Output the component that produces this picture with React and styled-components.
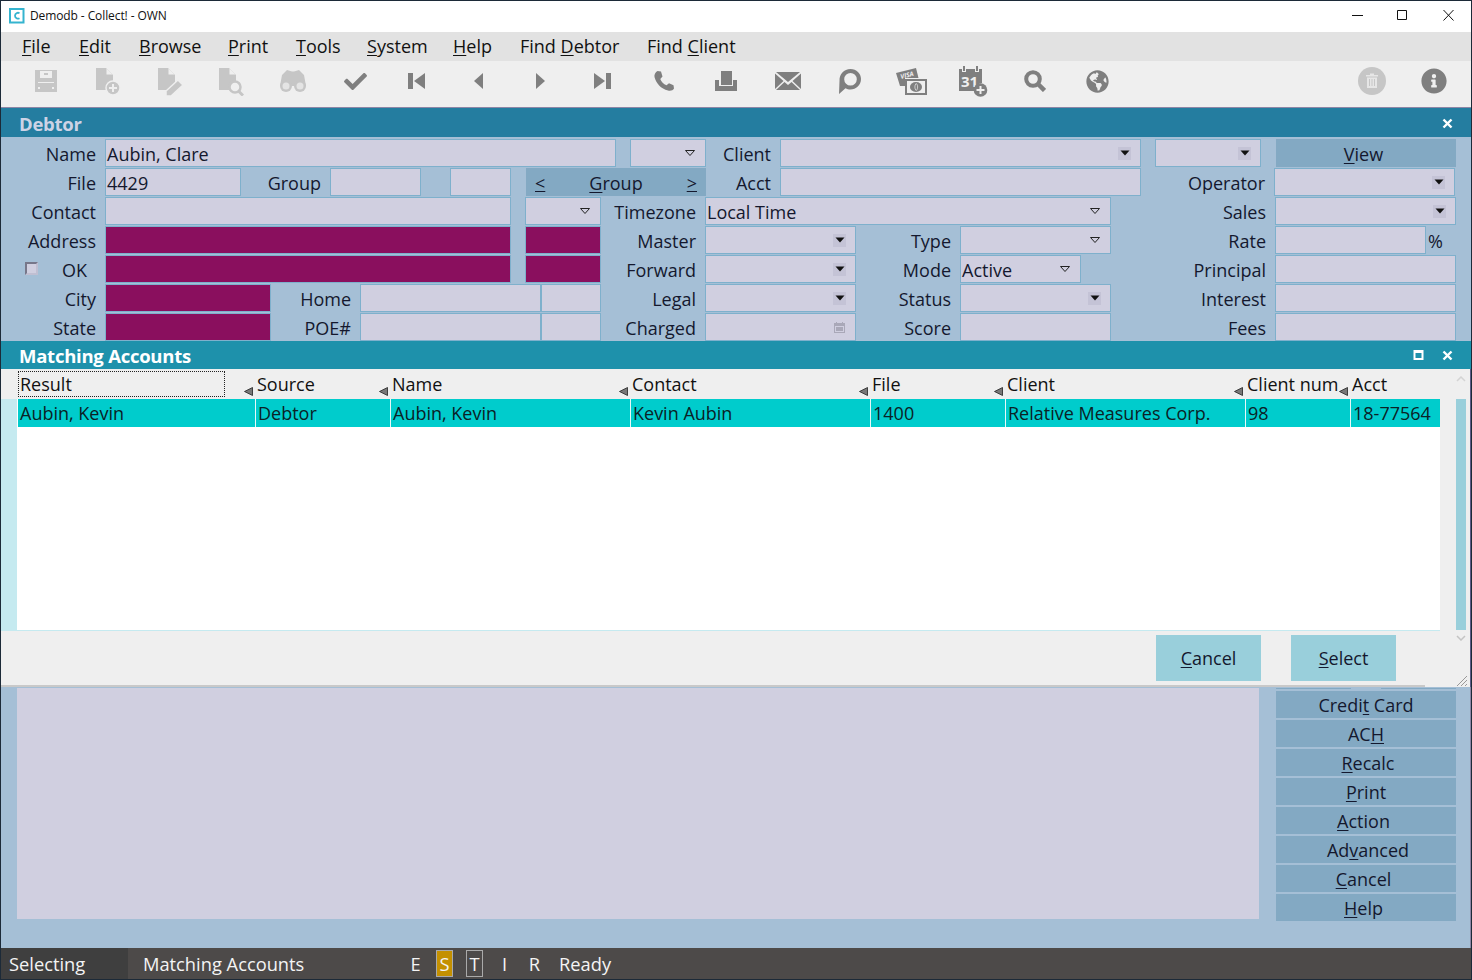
import React from 'react';
import styled, { createGlobalStyle } from 'styled-components';
import { FaCheck, FaGlobeAmericas, FaInfoCircle } from 'react-icons/fa';

const GlobalStyle = createGlobalStyle`
	html, body {
		margin: 0;
		padding: 0;
		background: #a5bfd6;
	}
	* {
		box-sizing: border-box;
	}
	body {
		font-family: 'Open Sans', 'Noto Sans', sans-serif;
		color: #14182e;
	}
`;

const Window = styled.div`
	width: 1472px;
	height: 980px;
	display: flex;
	flex-direction: column;
	border: 1px solid #1c2a38;
	overflow: hidden;
	font-size: 18px;
`;

const TitleBar = styled.div`
	height: 31px;
	flex: none;
	background: #fff;
	display: flex;
	align-items: center;
	padding-left: 8px;
	padding-bottom: 2px;
	color: #111;
`;
const TitleText = styled.span`
	font-size: 12px;
	letter-spacing: -0.1px;
	margin-left: 5px;
`;
const WinButtons = styled.div`
	margin-left: auto;
	display: flex;
	align-items: center;
	gap: 29px;
	padding-right: 15px;
`;

const MenuBar = styled.div`
	height: 29px;
	flex: none;
	background: #e2e2e2;
	display: flex;
	align-items: center;
	padding-left: 21px;
	padding-bottom: 2px;
	color: #111;
`;
const MenuItem = styled.span`
	flex: none;
	width: ${(p) => p.$w}px;
	white-space: nowrap;
`;

const Toolbar = styled.div`
	height: 47px;
	flex: none;
	background: #efefef;
	border-bottom: 1px solid #8d86a6;
	display: flex;
	align-items: center;
	padding-bottom: 6px;
`;
const ToolSlot = styled.div`
	width: 61.85px;
	height: 40px;
	flex: none;
	display: flex;
	align-items: center;
	justify-content: center;
	color: ${(p) => (p.$off ? '#c6c6c6' : '#7f7f7f')};
`;
const ToolStart = styled.div`
	width: ${(p) => p.$w}px;
	flex: none;
`;
const ToolPush = styled.div`
	margin-left: auto;
`;

const PanelHeader = styled.div`
	height: ${(p) => p.$h}px;
	flex: none;
	background: ${(p) => p.$bg};
	display: flex;
	align-items: center;
	padding: ${(p) => p.$pt || 0}px 18px 0 18px;
	font-weight: 700;
	font-size: 18.5px;
	letter-spacing: -0.25px;
	color: ${(p) => p.$color};
`;
const HeaderIcons = styled.div`
	margin-left: auto;
	display: flex;
	align-items: center;
	gap: 18px;
`;

const Form = styled.div`
	height: 204px;
	flex: none;
	padding-top: 2px;
	display: flex;
	flex-direction: column;
	gap: 1px;
	overflow: hidden;
`;
const Row = styled.div`
	display: flex;
	height: 28px;
	flex: none;
`;
const Label = styled.div`
	flex: none;
	width: ${(p) => p.$w}px;
	margin-right: 9px;
	text-align: right;
	line-height: 30px;
	white-space: nowrap;
`;
const Field = styled.div`
	flex: none;
	width: ${(p) => p.$w}px;
	margin-left: ${(p) => p.$ml || 0}px;
	height: 28px;
	background: ${(p) => (p.$alert ? '#8a0f5e' : '#d0cfe0')};
	border: 1px solid #7eb0cc;
	padding: 2px 0 0 1px;
	line-height: 26px;
	display: flex;
	justify-content: space-between;
	align-items: center;
`;
const Arrow = styled.span`
	flex: none;
	width: 13px;
	height: 13px;
	margin-top: -2px;
	margin-right: 9px;
	background: ${(p) => (p.$box ? '#c4c3d6' : 'transparent')};
	display: flex;
	align-items: center;
	justify-content: center;
`;
const FormButton = styled.div`
	flex: none;
	width: ${(p) => p.$w}px;
	margin-left: ${(p) => p.$ml || 0}px;
	height: 28px;
	padding-top: 2px;
	padding-right: ${(p) => p.$pr || 0}px;
	background: #83a9c3;
	display: flex;
	align-items: center;
	justify-content: center;
	line-height: 26px;
`;
const GroupLink = styled.span`
	text-decoration: underline;
	margin: 0 9px;
`;
const GroupName = styled.span`
	flex: 1;
	text-align: center;
`;
const Percent = styled.span`
	margin-left: 2px;
	line-height: 30px;
`;
const Check = styled.span`
	flex: none;
	width: 13px;
	height: 13px;
	margin: 7px 0 0 24px;
	background: #d0cfe0;
	border: 2px solid #77778a;
	border-right-color: #c0bfd2;
	border-bottom-color: #c0bfd2;
`;
const OkLabel = styled.div`
	flex: none;
	width: 49px;
	margin-right: 18px;
	text-align: right;
	line-height: 30px;
`;

const MatchBody = styled.div`
	height: 318px;
	flex: none;
	background: #efefef;
	display: flex;
	position: relative;
	overflow: hidden;
`;
const MatchMain = styled.div`
	flex: 1;
	min-width: 0;
	display: flex;
	flex-direction: column;
`;
const ListArea = styled.div`
	height: 262px;
	flex: none;
	padding-left: 16px;
	background: #c5eaf0;
	display: flex;
	flex-direction: column;
	border-bottom: 1px solid #c5eaf0;
`;
const HeadRow = styled.div`
	height: 30px;
	flex: none;
	display: flex;
	background: #efefef;
	margin-left: -16px;
	padding-left: 17px;
`;
const HeadCell = styled.div`
	flex: none;
	width: ${(p) => p.$w}px;
	position: relative;
	padding-left: 1px;
	line-height: 30px;
	color: #111;
	white-space: nowrap;
	&:first-child {
		padding-left: 2px;
	}
`;
const FocusBox = styled.span`
	position: absolute;
	left: 0;
	top: 2px;
	width: 207px;
	height: 26px;
	border: 1px dotted #222;
`;
const SortMark = styled.span`
	position: absolute;
	right: 3px;
	bottom: 3px;
	width: 9px;
	height: 9px;
	display: flex;
`;
const ListBody = styled.div`
	flex: 1;
	background: #fff;
`;
const DataRow = styled.div`
	height: 28px;
	margin-left: 1px;
	display: flex;
	background: #00cccc;
`;
const DataCell = styled.div`
	flex: none;
	width: ${(p) => p.$w}px;
	padding-left: 2px;
	border-right: 1px solid #e8f8f8;
	line-height: 28px;
	color: #0b2226;
	white-space: nowrap;
	&:last-child {
		border-right: none;
	}
`;
const ActionBar = styled.div`
	flex: 1;
	display: flex;
	justify-content: flex-end;
	align-items: flex-start;
	padding: 4px 29px 0 0;
	gap: 30px;
	margin-right: 15px;
	border-bottom: 2px solid #c9c9c9;
`;
const DialogButton = styled.div`
	width: 105px;
	height: 46px;
	background: #99cfdb;
	display: flex;
	align-items: center;
	justify-content: center;
`;
const ScrollCol = styled.div`
	width: 30px;
	flex: none;
	display: flex;
	flex-direction: column;
	align-items: center;
	padding: 7px 0 0 12px;
`;
const ScrollThumb = styled.div`
	width: 10px;
	height: 231px;
	margin-top: 17px;
	background: #99cfdb;
`;
const ScrollDown = styled.div`
	display: flex;
	margin-top: 5px;
`;
const RightEdge = styled.div`
	width: 1px;
	flex: none;
	background: #5c5a86;
`;
const Grip = styled.svg`
	position: absolute;
	right: 3px;
	bottom: 0;
`;

const Lower = styled.div`
	flex: 1;
	min-height: 0;
	display: flex;
	padding: 1px 14px 0 16px;
	background: #a5bfd6;
	border-right: 1px solid #8d86a6;
`;
const NotesPane = styled.div`
	width: 1242px;
	height: 231px;
	flex: none;
	background: #d0cfe0;
`;
const SideButtons = styled.div`
	margin-left: auto;
	width: 180px;
	display: flex;
	flex-direction: column;
	gap: 2px;
`;
const HiddenEdge = styled.div`
	height: 1px;
	flex: none;
	display: flex;
	justify-content: space-between;
`;
const HiddenEdgePart = styled.div`
	width: 75px;
	background: #83a9c3;
`;
const SideButton = styled.div`
	height: 27px;
	flex: none;
	background: #83a9c3;
	padding-left: ${(p) => (p.$nudge > 0 ? p.$nudge : 0)}px;
	padding-right: ${(p) => (p.$nudge < 0 ? -p.$nudge : 0)}px;
	display: flex;
	align-items: center;
	justify-content: center;
	line-height: 30px;
`;

const StatusBar = styled.div`
	height: 31px;
	flex: none;
	background: #4d4a49;
	color: #f4f4f4;
	display: flex;
	align-items: stretch;
	font-size: 18.3px;
	line-height: 32px;
`;
const StatusMode = styled.div`
	width: 127px;
	flex: none;
	background: #3f3f3f;
	padding-left: 8px;
`;
const StatusContext = styled.div`
	width: 279px;
	flex: none;
	padding-left: 15px;
	white-space: nowrap;
`;
const Flag = styled.div`
	width: 17px;
	height: 27px;
	align-self: center;
	flex: none;
	margin-right: ${(p) => p.$mr}px;
	display: flex;
	align-items: center;
	justify-content: center;
	background: ${(p) => (p.$on ? '#c49000' : 'transparent')};
	border: 1px solid ${(p) => (p.$on || p.$ring ? '#aaa' : 'transparent')};
`;

const U = styled.span`
	text-decoration: underline;
	text-underline-offset: 2px;
`;

const DropArrow = ({ filled }) => (
	<svg width="10" height="6" viewBox="0 0 10 6">
		{filled ? (
			<path d="M0.5 0.5h9L5 5.5z" fill="#111" />
		) : (
			<path d="M0.5 0.5h9L5 5.5z" fill="none" stroke="#222" />
		)}
	</svg>
);

const Combo = ({ w, ml, box, children }) => (
	<Field $w={w} $ml={ml}>
		<span>{children}</span>
		<Arrow $box={box}>
			<DropArrow filled={box} />
		</Arrow>
	</Field>
);

const CloseIcon = () => (
	<svg width="11" height="11" viewBox="0 0 11 11">
		<path d="M1.5 1.5l8 8M9.5 1.5l-8 8" stroke="#fff" strokeWidth="2.4" />
	</svg>
);

const Sort = () => (
	<SortMark>
		<svg width="9" height="9" viewBox="0 0 9 9">
			<path d="M8.5 0.5v8L0.5 4.5z" fill="#777" stroke="#222" strokeWidth="0.8" />
		</svg>
	</SortMark>
);

const FileBase = ({ children }) => (
	<svg width="26" height="29" viewBox="0 0 26 29" fill="currentColor">
		<path d="M1 1h10l7 7v15H1z" />
		<path d="M11.500 1.500v6h6z" fill="#efefef" />
		{children}
	</svg>
);

const icons = {
	save: (
		<svg width="22" height="22" viewBox="0 0 22 22" fill="currentColor">
			<path fillRule="evenodd" d="M0 0h22v22H0zM5 1v7h12V1zM3 12v1h16v-1zM3 17h2v2H3zM17 17h2v2h-2z" />
			<path d="M9 3h4v2H9z" />
		</svg>
	),
	add: (
		<FileBase>
			<circle cx="18" cy="21" r="7" stroke="#efefef" strokeWidth="1.500" />
			<path d="M14 20h8v2h-8zM17 17h2v8h-2z" fill="#efefef" />
		</FileBase>
	),
	edit: (
		<FileBase>
			<path d="M21 13l5 5-12 11h-5v-5z" stroke="#efefef" strokeWidth="1.500" />
		</FileBase>
	),
	find: (
		<FileBase>
			<circle cx="17" cy="20" r="5.500" fill="#efefef" stroke="currentColor" strokeWidth="2.500" />
			<path d="M20.500 24l4.500 4.500" stroke="currentColor" strokeWidth="3" />
		</FileBase>
	),
	binoculars: (
		<svg width="26" height="22" viewBox="0 0 26 22" fill="currentColor">
			<path d="M7 0l5 1.500h2L19 0l5 5 2 11H0l2-11z" />
			<circle cx="6" cy="16" r="6" />
			<circle cx="20" cy="16" r="6" />
			<circle cx="6" cy="16" r="3.500" fill="#e4e4e4" />
			<circle cx="20" cy="16" r="3.500" fill="#e4e4e4" />
		</svg>
	),
	check: <FaCheck size={23} />,
	first: (
		<svg width="17" height="16" viewBox="0 0 17 16" fill="currentColor">
			<path d="M0 0h5v16H0zM17 0v16L6 8z" />
		</svg>
	),
	prev: (
		<svg width="9" height="16" viewBox="0 0 9 16" fill="currentColor">
			<path d="M9 0v16L0 8z" />
		</svg>
	),
	next: (
		<svg width="9" height="16" viewBox="0 0 9 16" fill="currentColor">
			<path d="M0 0v16l9-8z" />
		</svg>
	),
	last: (
		<svg width="17" height="16" viewBox="0 0 17 16" fill="currentColor">
			<path d="M0 0v16l11-8zM12 0h5v16h-5z" />
		</svg>
	),
	phone: (
		<svg width="20" height="20" viewBox="0 0 20 20" fill="currentColor">
			<path d="M3.500 0L7 .5l1.500 5L6.300 8C7.300 11 9.500 13 12.500 14.200l2.500-2 4.500 2 .5 3.300C19 19.500 16.500 20 14 19.500 7 18 2 12 .5 6 0 3.500 1.500 1 3.500 0z" />
		</svg>
	),
	stamp: (
		<svg width="22" height="20" viewBox="0 0 22 20" fill="currentColor">
			<path d="M6 0h11v14H6zM0 9h4v6h14V9h4v11H0z" />
		</svg>
	),
	mail: (
		<svg width="26" height="18" viewBox="0 0 26 18" fill="currentColor">
			<path d="M1 0h24L13 10zM0 1.500l8.500 7.500L0 17zM26 1.500L17.500 9l8.500 8zM9.500 10l3.500 3 3.500-3L25 18H1z" />
		</svg>
	),
	pin: (
		<svg width="22" height="25" viewBox="0 0 22 25" fill="currentColor">
			<path fillRule="evenodd" d="M11.500 0C17.500 0 22 4.500 22 10c0 6-5 10.500-10.500 10.500-2 0-3.500-.5-5-1.300L0 25l.5-13C0 5 5 0 11.500 0zM11.500 4a6.300 6.300 0 100 12.600 6.300 6.300 0 000-12.600z" />
		</svg>
	),
	card: (
		<svg width="31" height="27" viewBox="0 0 31 27" fill="currentColor">
			<path d="M0 5l20-5 2.500 10H9v8H4z" />
			<text x="5" y="11" fontSize="6.500" fontWeight="700" fontStyle="italic" fill="#efefef" transform="rotate(-14 5 11)">VISA</text>
			<path fillRule="evenodd" d="M9 11h22v16H9zM11 13v12h18V13z" />
			<ellipse cx="20" cy="19" rx="6" ry="5" />
			<path d="M20 15.500c-1.500 2-1.500 5 0 7M20.500 15.500c1.500 2 1.500 5 0 7" fill="none" stroke="#efefef" strokeWidth=".7" />
		</svg>
	),
	calendar: (
		<svg width="29" height="31" viewBox="0 0 29 31" fill="currentColor">
			<path d="M4 0h2v5H4zM17 0h2v5h-2z" />
			<path d="M0 3h3v3h4V3h9v3h4V3h3v14a8 8 0 00-7 8H0z" />
			<text x="2" y="21" fontSize="15" fontWeight="700" fill="#efefef">31</text>
			<circle cx="21.500" cy="24" r="6.800" />
			<path d="M17.500 23h8v2h-8zM20.500 20h2v8h-2z" fill="#efefef" />
		</svg>
	),
	search: (
		<svg width="22" height="22" viewBox="0 0 22 22" fill="none" stroke="currentColor">
			<circle cx="9" cy="9" r="6.800" strokeWidth="4" />
			<path d="M14 14l6.500 6.500" strokeWidth="4.500" />
		</svg>
	),
	globe: <FaGlobeAmericas size={23} />,
	trash: (
		<svg width="28" height="28" viewBox="0 0 28 28">
			<circle cx="14" cy="14" r="14" fill="currentColor" />
			<path d="M8 8h12v1.500H8zM12 6.500h4V8h-4zM9 10.500h10V21H9z" fill="#e6e6e6" />
			<path d="M11.500 12v7M14 12v7M16.500 12v7" stroke="#c6c6c6" />
		</svg>
	),
	info: <FaInfoCircle size={26} />,
};

const toolbar = [
	['save', true],
	['add', true],
	['edit', true],
	['find', true],
	['binoculars', true],
	['check'],
	['first'],
	['prev'],
	['next'],
	['last'],
	['phone'],
	['stamp'],
	['mail'],
	['pin'],
	['card'],
	['calendar'],
	['search'],
	['globe'],
];

const columns = [
	{ w: 238, head: 'Result', cell: 'Aubin, Kevin' },
	{ w: 135, head: 'Source', cell: 'Debtor' },
	{ w: 240, head: 'Name', cell: 'Aubin, Kevin' },
	{ w: 240, head: 'Contact', cell: 'Kevin Aubin' },
	{ w: 135, head: 'File', cell: '1400' },
	{ w: 240, head: 'Client', cell: 'Relative Measures Corp.' },
	{ w: 105, head: 'Client num', cell: '98' },
	{ w: 90, head: 'Acct', cell: '18-77564' },
];

const sideButtons = [
	['Credi', 't', ' Card', 0],
	['AC', 'H', '', 0],
	['', 'R', 'ecalc', 4],
	['', 'P', 'rint', 0],
	['', 'A', 'ction', -5],
	['Ad', 'v', 'anced', 4],
	['', 'C', 'ancel', -5],
	['', 'H', 'elp', -5],
];

const App = () => (
	<Window>
		<GlobalStyle />
		<TitleBar>
			<svg width="16" height="16" viewBox="0 0 16 16">
				<rect x="1" y="1" width="13.500" height="13.500" fill="#fff" stroke="#35b4cf" strokeWidth="2" />
				<path d="M10.500 5.200A3 3 0 006 7.700a3 3 0 004.500 2.500" fill="none" stroke="#35b4cf" strokeWidth="1.800" />
			</svg>
			<TitleText>Demodb - Collect! - OWN</TitleText>
			<WinButtons>
				<svg width="16" height="11" viewBox="0 0 16 11"><path d="M2 5.500h11" stroke="#111" /></svg>
				<svg width="16" height="11" viewBox="0 0 16 11"><path d="M2.500 .5h9v9h-9z" fill="none" stroke="#111" /></svg>
				<svg width="16" height="11" viewBox="0 0 16 11"><path d="M3.500 0l10 10.500M13.500 0l-10 10.500" stroke="#111" /></svg>
			</WinButtons>
		</TitleBar>
		<MenuBar>
			<MenuItem $w={57}><U>F</U>ile</MenuItem>
			<MenuItem $w={60}><U>E</U>dit</MenuItem>
			<MenuItem $w={89}><U>B</U>rowse</MenuItem>
			<MenuItem $w={68}><U>P</U>rint</MenuItem>
			<MenuItem $w={71}><U>T</U>ools</MenuItem>
			<MenuItem $w={86}><U>S</U>ystem</MenuItem>
			<MenuItem $w={67}><U>H</U>elp</MenuItem>
			<MenuItem $w={127}>Find <U>D</U>ebtor</MenuItem>
			<MenuItem $w={100}>Find <U>C</U>lient</MenuItem>
		</MenuBar>
		<Toolbar>
			<ToolStart $w={14} />
			{toolbar.map(([name, off]) => (
				<ToolSlot key={name} $off={off}>
					{icons[name]}
				</ToolSlot>
			))}
			<ToolPush />
			<ToolSlot $off>{icons.trash}</ToolSlot>
			<ToolSlot>{icons.info}</ToolSlot>
			<ToolStart $w={6} />
		</Toolbar>
		<PanelHeader $h={29} $pt={2} $bg="#247da0" $color="#cdd3e6">
			Debtor
			<HeaderIcons>
				<CloseIcon />
			</HeaderIcons>
		</PanelHeader>
		<Form>
			<Row>
				<Label $w={95}>Name</Label>
				<Field $w={511}>Aubin, Clare</Field>
				<Combo w={76} ml={14} />
				<Label $w={65}>Client</Label>
				<Combo w={361} box />
				<Combo w={106} ml={14} box />
				<FormButton $w={180} $ml={15} $pr={5}><span><U>V</U>iew</span></FormButton>
			</Row>
			<Row>
				<Label $w={95}>File</Label>
				<Field $w={136}>4429</Field>
				<Label $w={80}>Group</Label>
				<Field $w={91} />
				<Field $w={61} $ml={29} />
				<FormButton $w={180} $ml={15}>
					<GroupLink>&lt;</GroupLink>
					<GroupName><U>G</U>roup</GroupName>
					<GroupLink>&gt;</GroupLink>
				</FormButton>
				<Label $w={65}>Acct</Label>
				<Field $w={361} />
				<Label $w={124}>Operator</Label>
				<Combo w={181} box />
			</Row>
			<Row>
				<Label $w={95}>Contact</Label>
				<Field $w={406} />
				<Combo w={76} ml={14} />
				<Label $w={95}>Timezone</Label>
				<Combo w={406}>Local Time</Combo>
				<Label $w={155}>Sales</Label>
				<Combo w={181} box />
			</Row>
			<Row>
				<Label $w={95}>Address</Label>
				<Field $w={406} $alert />
				<Field $w={76} $ml={14} $alert />
				<Label $w={95}>Master</Label>
				<Combo w={151} box />
				<Label $w={95}>Type</Label>
				<Combo w={151} />
				<Label $w={155}>Rate</Label>
				<Field $w={151} />
				<Percent>%</Percent>
			</Row>
			<Row>
				<Check />
				<OkLabel>OK</OkLabel>
				<Field $w={406} $alert />
				<Field $w={76} $ml={14} $alert />
				<Label $w={95}>Forward</Label>
				<Combo w={151} box />
				<Label $w={95}>Mode</Label>
				<Combo w={121}>Active</Combo>
				<Label $w={185}>Principal</Label>
				<Field $w={181} />
			</Row>
			<Row>
				<Label $w={95}>City</Label>
				<Field $w={166} $alert />
				<Label $w={80}>Home</Label>
				<Field $w={181} />
				<Field $w={60} />
				<Label $w={95}>Legal</Label>
				<Combo w={151} box />
				<Label $w={95}>Status</Label>
				<Combo w={151} box />
				<Label $w={155}>Interest</Label>
				<Field $w={181} />
			</Row>
			<Row>
				<Label $w={95}>State</Label>
				<Field $w={166} $alert />
				<Label $w={80}>POE#</Label>
				<Field $w={181} />
				<Field $w={60} />
				<Label $w={95}>Charged</Label>
				<Field $w={151}>
					<span />
					<Arrow>
						<svg width="11" height="11" viewBox="0 0 11 11" fill="#a9a8b8">
							<path fillRule="evenodd" d="M0 1h11v10H0zM1 4v6h9V4z" />
							<path d="M2 0h1v2H2zM8 0h1v2H8zM2 5h7v4H2z" />
						</svg>
					</Arrow>
				</Field>
				<Label $w={95}>Score</Label>
				<Field $w={151} />
				<Label $w={155}>Fees</Label>
				<Field $w={181} />
			</Row>
		</Form>
		<PanelHeader $h={28} $bg="#1e91ab" $color="#fff">
			Matching Accounts
			<HeaderIcons>
				<svg width="11" height="10" viewBox="0 0 11 10">
					<path fillRule="evenodd" d="M0.500 0h10v10H.5zM2.500 3v5h6V3z" fill="#fff" />
				</svg>
				<CloseIcon />
			</HeaderIcons>
		</PanelHeader>
		<MatchBody>
			<MatchMain>
				<ListArea>
					<HeadRow>
						{columns.map((c, i) => (
							<HeadCell key={c.head} $w={c.w}>
								{i === 0 && <FocusBox />}
								{c.head}
								{i < 7 && <Sort />}
							</HeadCell>
						))}
					</HeadRow>
					<ListBody>
						<DataRow>
							{columns.map((c) => (
								<DataCell key={c.head} $w={c.w}>{c.cell}</DataCell>
							))}
						</DataRow>
					</ListBody>
				</ListArea>
				<ActionBar>
					<DialogButton><span><U>C</U>ancel</span></DialogButton>
					<DialogButton><span><U>S</U>elect</span></DialogButton>
				</ActionBar>
			</MatchMain>
			<ScrollCol>
				<svg width="10" height="6" viewBox="0 0 10 6"><path d="M1 5l4-4 4 4" fill="none" stroke="#d4d4d4" strokeWidth="1.500" /></svg>
				<ScrollThumb />
				<ScrollDown>
					<svg width="10" height="6" viewBox="0 0 10 6"><path d="M1 1l4 4 4-4" fill="none" stroke="#c4c4c4" strokeWidth="1.500" /></svg>
				</ScrollDown>
			</ScrollCol>
			<RightEdge />
			<Grip width="12" height="12" viewBox="0 0 12 12">
				<path d="M1 11L11 1M5 11l6-6M9 11l2-2" stroke="#999" />
			</Grip>
		</MatchBody>
		<Lower>
			<NotesPane />
			<SideButtons>
				<HiddenEdge>
					<HiddenEdgePart />
					<HiddenEdgePart />
				</HiddenEdge>
				{sideButtons.map(([a, b, c, nudge]) => (
					<SideButton key={a + b + c} $nudge={nudge}>
						<span>{a}<U>{b}</U>{c}</span>
					</SideButton>
				))}
			</SideButtons>
		</Lower>
		<StatusBar>
			<StatusMode>Selecting</StatusMode>
			<StatusContext>Matching Accounts</StatusContext>
			<Flag $mr={12}>E</Flag>
			<Flag $mr={13} $on>S</Flag>
			<Flag $mr={13} $ring>T</Flag>
			<Flag $mr={13}>I</Flag>
			<Flag $mr={16}>R</Flag>
			<span>Ready</span>
		</StatusBar>
	</Window>
);

export default App;
